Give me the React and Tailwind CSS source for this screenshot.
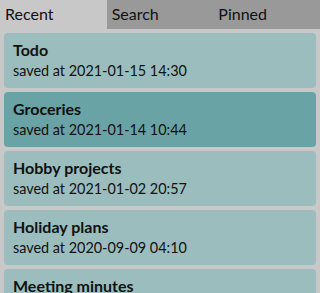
const notes = [
  { title: "Todo", saved: "2021-01-15 14:30" },
  { title: "Groceries", saved: "2021-01-14 10:44", active: true },
  { title: "Hobby projects", saved: "2021-01-02 20:57" },
  { title: "Holiday plans", saved: "2020-09-09 04:10" },
  { title: "Meeting minutes", saved: "2020-08-21 09:12" },
];

export default function App() {
  return (
    <div
      className="h-[293px] w-[320px] overflow-hidden bg-[#c8c8c8] text-[#111]"
      style={{ fontFamily: "Lato, 'Noto Sans', sans-serif" }}
    >
      {/* tabs */}
      <div className="grid h-[29px] grid-cols-3">
        <div className="bg-[#c8c8c8] px-[5px] pt-[4px] text-[16px] leading-[20px]">Recent</div>
        <div className="bg-[#999999] px-[5px] pt-[4px] text-[16px] leading-[20px]">Search</div>
        <div className="bg-[#999999] px-[5px] pt-[4px] text-[16px] leading-[20px]">Pinned</div>
      </div>

      {/* notes list */}
      <div className="flex flex-col gap-[4px] px-[4px] pt-[4px]">
        {notes.map((n) => (
          <div
            key={n.title}
            className={
              "h-[55px] shrink-0 rounded-[4px] px-[9px] pt-[6px] " +
              (n.active ? "bg-[#6aa3a5]" : "bg-[#9bbdbd]")
            }
          >
            <div className="text-[16px] font-bold leading-[22px]">{n.title}</div>
            <div className="text-[14.4px] leading-[20px]">saved at {n.saved}</div>
          </div>
        ))}
      </div>
    </div>
  );
}
